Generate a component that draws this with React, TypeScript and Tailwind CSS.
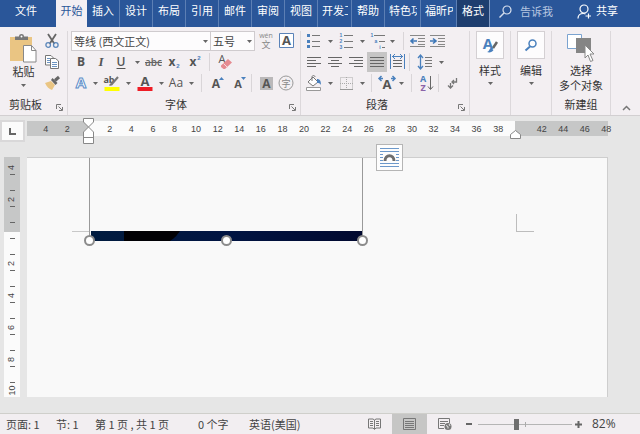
import React, { useState } from 'react';

type Children = { children?: React.ReactNode };

const TABS = ['插入', '设计', '布局', '引用', '邮件', '审阅', '视图'];
const RULER_LEFT = [4, 2];
const RULER_MAIN = Array.from({ length: 19 }, (_, i) => (i + 1) * 2);
const RULER_RIGHT = [42, 44, 46, 48];
const VERTICAL_MAIN = ['', '2', '', '4', '', '6', '', '8', ''];

const Glyph: React.FC<Children & { size?: string; box?: string }> = ({ children, size = 'w-4 h-4', box = '0 0 16 16' }) => (
  <svg className={`${size} shrink-0 overflow-visible`} viewBox={box} fill="none" aria-hidden="true">{children}</svg>
);

const Letter: React.FC<{ x: number; y: number; size: number; fill?: string; bold?: boolean; text: string; stroke?: string }> =
  ({ x, y, size, fill = '#555', bold, text, stroke }) => (
    <text
      x={x}
      y={y}
      fontSize={size}
      fill={fill}
      stroke={stroke}
      fontWeight={bold ? 700 : 400}
      textAnchor="middle"
      fontFamily={size < 7 ? '"Liberation Sans",sans-serif' : '"Open Sans","Noto Sans CJK SC",sans-serif'}
    >
      {text}
    </text>
  );

const Tool: React.FC<Children & { label: string; width?: string; active?: boolean }> = ({ children, label, width = 'w-5', active }) => (
  <button type="button" aria-label={label} className={`${width} h-5 shrink-0 flex items-center justify-center ${active ? 'bg-[#c6c5c5]' : ''}`}>{children}</button>
);

const Caret = () => (
  <Glyph size="w-[5px] h-[3px]" box="0 0 5 3"><path d="M0 0h5L2.500 3z" fill="#666" /></Glyph>
);

const Arrow: React.FC<{ label?: string; width?: string }> = ({ label = '更多', width = 'w-3' }) => (
  <button type="button" aria-label={label} className={`${width} h-5 shrink-0 flex items-center justify-center`}><Caret /></button>
);

const Divider = () => <span className="w-px h-[18px] shrink-0 bg-[#d9d5d8]" />;

const GroupLabel: React.FC<{ text: string; launcher?: boolean }> = ({ text, launcher }) => (
  <div className="h-[22px] flex items-center">
    <span className="flex-1 text-center">{text}</span>
    {launcher && (
      <button type="button" aria-label={`${text}设置`} className="w-4 h-[22px] pt-[7px] flex items-center justify-center">
        <Glyph size="w-[7px] h-[7px]" box="0 0 7 7"><path d="M.5 5V.5H5M2.500 2.500L6 6M6.500 3v3.500H3" stroke="#777" /></Glyph>
      </button>
    )}
  </div>
);

const Lines: React.FC<{ rows: [number, number][] }> = ({ rows }) => (
  <Glyph size="w-[14px] h-[12px]" box="0 0 14 12">
    {rows.map(([from, to], i) => <path key={i} d={`M${from} ${i * 3 + 1.5}H${to}`} stroke="#666" />)}
  </Glyph>
);

const Tab: React.FC<{ label: string; width: string; clipped?: boolean }> = ({ label, width, clipped }) => (
  <button type="button" className={`${width} shrink-0 flex items-start ${clipped ? 'justify-start pl-1 pr-[3px]' : 'justify-center'} border-r border-[#5c7fb4]`}>
    <span className="overflow-hidden whitespace-nowrap leading-[21px]">{label}</span>
  </button>
);

const TitleTabs = () => (
  <header className="h-[27px] flex bg-[#2a5699] text-white">
    <nav className="flex">
      <button type="button" className="w-14 pr-1 flex items-start justify-center leading-[21px]">文件</button>
      <button type="button" className="w-[31px] flex items-start justify-center leading-[21px] bg-[#f3eff3] text-[#2a5699]">开始</button>
      {TABS.map(tab => <Tab key={tab} label={tab} width="w-[33px]" />)}
      <Tab label="开发工" width="w-[34px]" clipped />
      <Tab label="帮助" width="w-[33px]" />
      <Tab label="特色功" width="w-9" clipped />
      <Tab label="福昕P" width="w-9" clipped />
      <button type="button" className="w-[33px] flex items-start justify-center leading-[21px] bg-[#1e3e6f] border-r border-[#7f9ac4]">格式</button>
    </nav>
    <button type="button" className="flex items-center gap-2 pl-[9px] pb-[5px] text-[#b6c6e0]">
      <Glyph size="w-[13px] h-[13px]" box="0 0 13 13"><path d="M5 8L.5 12.500" stroke="#d5deed" strokeWidth="1.500" /><circle cx="8" cy="5" r="4" stroke="#d5deed" strokeWidth="1.200" /></Glyph>
      告诉我
    </button>
    <button type="button" className="ml-auto mr-[22px] flex items-center gap-1 pb-[7px]">
      <Glyph size="w-[15px] h-[15px]" box="0 0 15 15"><path d="M1 15.500c0-3 2-5 5.500-5 1 0 1.500.2 2 .5M8.500 13h5.500M11.500 10.500v5" stroke="#fff" strokeWidth="1.200" /><circle cx="7" cy="6" r="4" stroke="#fff" strokeWidth="1.200" /></Glyph>
      共享
    </button>
  </header>
);

const ClipboardGroup = () => (
  <section className="w-[68px] flex flex-col border-r border-[#dcd8db]">
    <div className="h-[62px] flex">
      <button type="button" className="w-[45px] flex flex-col items-center pt-[3px] pl-[2px]">
        <Glyph size="w-[27px] h-[29px]" box="0 0 27 29">
          <path d="M0 3h22v24H0z" fill="#eac583" />
          <path d="M5 6V2.500h4C9 .8 10 0 11.500 0S14 .8 14 2.500h4V6z" fill="#777" />
          <circle cx="11.500" cy="2.500" r="1" fill="#fff" />
          <path d="M13.500 11.500h8l4.500 5v11.500H13.500z" fill="#fff" stroke="#888" />
          <path d="M21.500 11.500v5H26" stroke="#888" />
        </Glyph>
        <span className="leading-4">粘贴</span>
        <span className="mt-[5px]"><Caret /></span>
      </button>
      <div className="flex flex-col">
        <button type="button" aria-label="剪切" className="h-[19px] flex items-center">
          <Glyph size="w-[14px] h-[14px]" box="0 0 14 14"><path d="M3 0l6.500 10M11 0L4.500 10" stroke="#666" strokeWidth="1.800" /><circle cx="3.200" cy="11" r="2.300" stroke="#5b87ba" strokeWidth="1.300" /><circle cx="10.800" cy="11" r="2.300" stroke="#5b87ba" strokeWidth="1.300" /></Glyph>
        </button>
        <button type="button" aria-label="复制" className="h-[23px] flex items-center">
          <Glyph size="w-[14px] h-[14px]" box="0 0 14 14"><path d="M.5.5H6L8.500 3v7h-8z" fill="#fff" stroke="#777" /><path d="M5.500 3.500h5L13.500 6v7.500h-8z" fill="#fff" stroke="#777" /><path d="M2 3.500h3M2 5.500h3M2 7.500h3M7 7.500h5M7 9.500h5M7 11.500h5" stroke="#6d94c2" /></Glyph>
        </button>
        <button type="button" aria-label="格式刷" className="h-5 flex items-center">
          <Glyph size="w-[15px] h-[14px]" box="0 0 15 14"><path d="M0 7l6-2 4 4-3 5C4 13 2 11 0 7z" fill="#eac583" /><path d="M6 4l1.500-2 5 5L10.500 9z" fill="#666" /><path d="M10 4.500l4-3.500" stroke="#666" strokeWidth="3" /></Glyph>
        </button>
      </div>
    </div>
    <GroupLabel text="剪贴板" launcher />
  </section>
);

const FontGroup = () => {
  const [family, setFamily] = useState('等线 (西文正文)');
  const [size, setSize] = useState('五号');
  return (
    <section className="w-[233px] flex flex-col border-r border-[#dcd8db]">
      <div className="h-5 flex items-center pl-[3px]">
        <label className="relative w-[140px] h-5">
          <select aria-label="字体" value={family} onChange={e => setFamily(e.target.value)} className="appearance-none w-full h-full pl-[2px] pb-px bg-[#fdfcfd] border border-[#cfcbce] text-[#444]">
            <option>等线 (西文正文)</option>
          </select>
          <span className="absolute right-0 top-0 pointer-events-none"><Arrow label="字体列表" /></span>
        </label>
        <label className="relative w-[45px] h-5 -ml-px">
          <select aria-label="字号" value={size} onChange={e => setSize(e.target.value)} className="appearance-none w-full h-full pl-[2px] pb-px bg-[#fdfcfd] border border-[#cfcbce] text-[#444]">
            <option>五号</option>
          </select>
          <span className="absolute right-0 top-0 pointer-events-none"><Arrow label="字号列表" /></span>
        </label>
        <Tool label="拼音指南" width="w-[22px]"><Glyph><Letter x={8} y={5} size={7} fill="#888" text="wén" /><Letter x={8} y={15} size={9} fill="#888" text="文" /></Glyph></Tool>
        <Tool label="字符边框"><Glyph><path d="M.5.5h14v14H.5z" fill="#fff" stroke="#5b83b8" /><Letter x={7.5} y={12} size={13} bold text="A" /></Glyph></Tool>
      </div>
      <div className="h-[22px] flex items-center pl-[3px]">
        <Tool label="加粗"><span className="font-['Open_Sans'] font-bold text-xs text-[#555]">B</span></Tool>
        <Tool label="倾斜"><span className="font-['Liberation_Serif'] font-bold italic text-[13px] text-[#555]">I</span></Tool>
        <Tool label="下划线"><span className="font-['Open_Sans'] font-semibold text-xs text-[#555] underline underline-offset-2">U</span></Tool>
        <Arrow />
        <Tool label="删除线" width="w-[21px]"><span className="font-['Open_Sans'] font-semibold text-[10px] text-[#666] line-through">abc</span></Tool>
        <Tool label="下标"><Glyph><Letter x={6} y={12} size={12} bold text="x" /><Letter x={12} y={14} size={6} bold fill="#4a80bd" text="2" /></Glyph></Tool>
        <Tool label="上标"><Glyph><Letter x={7} y={12} size={12} bold text="x" /><Letter x={13} y={6} size={6} bold fill="#4a80bd" text="2" /></Glyph></Tool>
        <span className="w-[5px]" />
        <Divider />
        <Tool label="清除格式" width="w-[30px]">
          <Glyph><Letter x={5} y={9} size={11} text="A" /><path d="M4 11.500l7-6.500 4 3.500-7 6.500H6.500L4 13z" fill="#e58b91" /><path d="M6.500 9.500l4 4" stroke="#f6dcdf" /></Glyph>
        </Tool>
      </div>
      <div className="h-5 flex items-center pl-[3px]">
        <Tool label="文本效果"><Glyph><Letter x={8} y={13} size={15} bold fill="#fff" stroke="#5a8cc8" text="A" /></Glyph></Tool>
        <Arrow width="w-2" />
        <Tool label="突出显示" width="w-[25px]"><Glyph><Letter x={5} y={8} size={9} bold text="ab" /><path d="M7 10L14 2" stroke="#777" strokeWidth="2" /><path d="M5 10l2-2 1.500 1.500L6 11z" fill="#777" /><path d="M.5 12h15v4H.5z" fill="#ffff00" /></Glyph></Tool>
        <Arrow width="w-2" />
        <Tool label="字体颜色" width="w-[25px]"><Glyph><Letter x={8} y={11} size={13} bold text="A" /><path d="M.5 12h15v4H.5z" fill="#ee1c25" /></Glyph></Tool>
        <Arrow width="w-2" />
        <Tool label="更改大小写" width="w-[22px]"><span className="font-['Open_Sans'] text-xs text-[#555]">Aa</span></Tool>
        <Arrow width="w-2" />
        <span className="w-[6px]" />
        <Divider />
        <span className="w-[3px]" />
        <Tool label="增大字号" width="w-6"><Glyph><Letter x={7} y={13} size={12} bold text="A" /><path d="M10 5l2.500-3L15 5z" fill="#4a80bd" /></Glyph></Tool>
        <Tool label="减小字号" width="w-5"><Glyph><Letter x={7} y={13} size={11} bold text="A" /><path d="M10 2l2.500 3L15 2z" fill="#4a80bd" /></Glyph></Tool>
        <span className="w-[2px]" />
        <Divider />
        <span className="w-1" />
        <Tool label="字符底纹"><Glyph size="w-[13px] h-[13px]" box="0 0 13 13"><path d="M0 0h13v13H0z" fill="#bab8b9" /><Letter x={6.5} y={11} size={12} bold text="A" /></Glyph></Tool>
        <Tool label="带圈字符"><Glyph><circle cx="8" cy="8" r="7" stroke="#999" /><Letter x={8} y={11.500} size={9} fill="#888" text="字" /></Glyph></Tool>
      </div>
      <GroupLabel text="字体" launcher />
    </section>
  );
};

const Indent: React.FC<{ direction: 'in' | 'out' }> = ({ direction }) => (
  <Glyph>
    <path d="M0 2.500h15M8 5.500h7M8 8.500h7M8 11.500h7M0 13.500h15" stroke="#888" />
    <path d={direction === 'in' ? 'M0 8h5M3 5.500L6 8l-3 2.500' : 'M1 8h6M3.500 5.500L1 8l2.500 2.500'} stroke="#3f78b8" strokeWidth="1.600" />
  </Glyph>
);

const ParagraphGroup = () => (
  <section className="w-[169px] flex flex-col border-r border-[#dcd8db]">
    <div className="h-5 flex items-center pl-[3px]">
      <Tool label="项目符号">
        <Glyph><path d="M6 2.500h8M6 8.500h8M6 13.500h8" stroke="#777" /><path d="M1 1h3v3H1zM1 7h3v3H1zM1 12h3v3H1z" fill="#4a80bd" /></Glyph>
      </Tool>
      <Arrow />
      <Tool label="编号">
        <Glyph><path d="M6 2.500h9M6 8.500h9M6 14.500h9" stroke="#777" /><Letter x={3} y={4} size={5} bold fill="#4a80bd" text="1" /><Letter x={3} y={10} size={5} bold fill="#4a80bd" text="2" /><Letter x={3} y={16} size={5} bold fill="#4a80bd" text="3" /></Glyph>
      </Tool>
      <Arrow />
      <Tool label="多级列表">
        <Glyph><path d="M4 2.500h11M9 8.500h6M12 14.500h3" stroke="#777" /><Letter x={2} y={4} size={5} bold fill="#4a80bd" text="1" /><Letter x={6} y={10} size={5} bold fill="#4a80bd" text="a" /><Letter x={10} y={16} size={5} bold fill="#4a80bd" text="i" /></Glyph>
      </Tool>
      <Arrow width="w-2" />
      <span className="w-[7px]" />
      <Divider />
      <span className="w-1" />
      <Tool label="减少缩进"><Indent direction="out" /></Tool>
      <Tool label="增加缩进"><Indent direction="in" /></Tool>
    </div>
    <div className="h-[22px] flex items-center pl-[3px] gap-px">
      <Tool label="左对齐"><Lines rows={[[0, 14], [0, 9], [0, 14], [0, 9]]} /></Tool>
      <Tool label="居中"><Lines rows={[[0, 14], [3, 11], [0, 14], [3, 11]]} /></Tool>
      <Tool label="右对齐"><Lines rows={[[0, 14], [5, 14], [0, 14], [5, 14]]} /></Tool>
      <Tool label="两端对齐" active><Lines rows={[[0, 14], [0, 14], [0, 14], [0, 14]]} /></Tool>
      <Tool label="分散对齐">
        <Glyph><path d="M.5 0v15M14.500 0v15M2 2.500h11M5 0L2.500 2.500 5 5M10 0l2.500 2.500L10 5" stroke="#4a80bd" /><path d="M3 6.500h9M3 9.500h9M3 12.500h9" stroke="#666" /></Glyph>
      </Tool>
      <Divider />
      <Tool label="行距" width="w-[27px]">
        <Glyph><path d="M3.500 1v14M1 4l2.500-3L6 4M1 12l2.500 3L6 12" stroke="#4a80bd" strokeWidth="1.300" /><path d="M8 3.500h7M8 6.500h7M8 9.500h7M8 12.500h7" stroke="#777" /></Glyph>
      </Tool>
      <Arrow width="w-[5px]" />
    </div>
    <div className="h-5 flex items-center pl-[3px]">
      <Tool label="底纹">
        <Glyph><path d="M2 7l5-5 5 5-5 4z" fill="#fff" stroke="#777" /><path d="M6 6V2c0-2 3-2 3 0" stroke="#777" /><path d="M11 4c3 0 4 2 4 6-1.500-2-2-2-4-2z" fill="#4a80bd" /><path d="M.5 12.500h14v3H.5z" fill="#fff" stroke="#999" /></Glyph>
      </Tool>
      <Arrow />
      <Tool label="边框"><Glyph size="w-[13px] h-[13px]" box="0 0 13 13"><path d="M.5.5h12v12H.5zM6.500 0v13M0 6.500h13" stroke="#aaa" strokeDasharray="1 1" /><path d="M0 12.500h13" stroke="#999" /></Glyph></Tool>
      <Arrow />
      <span className="w-[3px]" />
      <Divider />
      <span className="w-[2px]" />
      <Tool label="中文版式" width="w-[25px]"><Glyph><Letter x={8} y={14} size={13} bold text="A" /><path d="M4 3.500H0M2.500 1L0 3.500 2.500 6M12 3.500h4M13.500 1L16 3.500 13.500 6" stroke="#4a80bd" strokeWidth="1.500" /></Glyph></Tool>
      <Arrow width="w-[5px]" />
      <span className="w-[7px]" />
      <Divider />
      <span className="w-1" />
      <Tool label="排序" width="w-[22px]"><Glyph><Letter x={4} y={7} size={9} bold fill="#4a80bd" text="A" /><Letter x={4} y={16} size={9} bold fill="#8a62a8" text="Z" /><path d="M11.500 1v13M9 11.500l2.500 3 2.500-3" stroke="#666" /></Glyph></Tool>
      <Divider />
      <Tool label="显示编辑标记" width="w-7"><Glyph><path d="M11.500 3v4H7M9 5L7 7l2 2M5.500 8v5M3 10.500l2.500 2.500L8 10.500" stroke="#777" strokeWidth="1.300" /></Glyph></Tool>
    </div>
    <GroupLabel text="段落" launcher />
  </section>
);

const BoxedGroup: React.FC<Children & { label: string }> = ({ children, label }) => (
  <section className="w-[41px] border-r border-[#dcd8db]">
    <button type="button" className="w-full flex flex-col items-center">
      <span className="w-7 h-7 flex items-center justify-center bg-[#fdfcfd] border border-[#d4d0d3]">{children}</span>
      <span className="mt-[3px] leading-4">{label}</span>
      <span className="mt-1"><Caret /></span>
    </button>
  </section>
);

const Ribbon = () => (
  <div className="h-[89px] flex pt-1 bg-[#f3eff2] border-b border-[#d2cfd1] text-[#333]">
    <ClipboardGroup />
    <FontGroup />
    <ParagraphGroup />
    <BoxedGroup label="样式">
      <Glyph><Letter x={6} y={12} size={15} bold fill="#4a80bd" text="A" /><path d="M15 5l-4 6" stroke="#666" strokeWidth="2.500" /><path d="M5 15c2 0 2-3 4-4l2.500 2c-1 2-4 3-6.500 2z" fill="#4a80bd" /></Glyph>
    </BoxedGroup>
    <BoxedGroup label="编辑">
      <Glyph size="w-3 h-3" box="0 0 12 12"><path d="M5 7.500L.5 11.500" stroke="#4a80bd" strokeWidth="2" /><circle cx="7.500" cy="4.500" r="3.500" stroke="#4a80bd" strokeWidth="1.500" /></Glyph>
    </BoxedGroup>
    <section className="w-[59px] flex flex-col border-r border-[#dcd8db]">
      <button type="button" className="h-[62px] flex flex-col items-center pt-[3px]">
        <Glyph size="w-7 h-[29px]" box="0 0 28 29">
          <path d="M.5.5h14v14H.5z" fill="#fff" stroke="#7ba3d0" />
          <path d="M9 4h15v15H9z" fill="#858585" />
          <path d="M18 11v13l3-3 2.500 6.500 2.500-1-3-6.500h4z" fill="#fff" stroke="#888" />
        </Glyph>
        <span className="leading-[15px] whitespace-nowrap">选择<br />多个对象</span>
      </button>
      <GroupLabel text="新建组" />
    </section>
    <button type="button" aria-label="折叠功能区" className="ml-auto mr-[9px] mb-1 self-end">
      <Glyph size="w-[9px] h-[6px]" box="0 0 9 6"><path d="M1 5l3.500-3.500L8 5" stroke="#777" strokeWidth="1.500" /></Glyph>
    </button>
  </div>
);

const Numbers: React.FC<{ values: number[] }> = ({ values }) => (
  <>{values.map(n => <span key={n} className="flex-1 w-0 flex justify-center">{n}</span>)}</>
);

const HorizontalRuler = () => (
  <div className="h-[41px] flex items-start pt-1">
    <button type="button" aria-label="制表符" className="w-[25px] h-[22px] border-2 border-[#d9d8d9] bg-[#fbfbfb] flex items-center justify-center">
      <Glyph size="w-[7px] h-[7px]" box="0 0 7 7"><path d="M1 0v6h6" stroke="#666" strokeWidth="2" /></Glyph>
    </button>
    <div className="flex-1 ml-[2px] mr-8 mt-px h-[15px] flex leading-4 font-['Liberation_Sans'] text-[9px] text-[#444]">
      <div className="w-[61px] pl-2 pr-[10px] flex bg-[#c6c7c7]"><Numbers values={RULER_LEFT} /></div>
      <div className="relative flex-1 pl-[11px] pr-[6px] flex bg-[#fbfbfb]">
        <Numbers values={RULER_MAIN} />
        <span className="absolute -left-[5px] -top-[3px]">
          <Glyph size="w-[11px] h-[26px]" box="0 0 11 26"><path d="M.5.5h10v3.500l-5 5-5-5zM5.500 9l5 5v11.500H.5V14zM.5 19.500h10" fill="#fff" stroke="#888" /></Glyph>
        </span>
        <span className="absolute -right-[6px] top-[9px]">
          <Glyph size="w-[11px] h-[9px]" box="0 0 11 9"><path d="M5.500.5l5 4v4H.5v-4z" fill="#fff" stroke="#888" /></Glyph>
        </span>
      </div>
      <div className="w-[93px] flex bg-[#c6c7c7]">
        <div className="flex-1 pl-4 -mr-[9px] flex"><Numbers values={RULER_RIGHT} /></div>
      </div>
    </div>
  </div>
);

const VerticalCell: React.FC<{ text: string }> = ({ text }) => (
  <div className="relative h-4 w-full flex items-center justify-center">
    <span className="-rotate-90 leading-none">{text}</span>
    <span className="absolute bottom-0 w-[5px] h-px bg-[#666]" />
  </div>
);

const VerticalRuler = () => (
  <div className="w-4 ml-1 flex flex-col font-['Liberation_Sans'] text-[9px] text-[#444]">
    <div className="h-[75px] pt-[2px] bg-[#c6c7c7]">
      {['4', '', '2', ''].map((t, i) => <VerticalCell key={i} text={t} />)}
    </div>
    <div className="bg-[#fbfbfb]">
      <div className="h-[7px] flex items-end justify-center"><span className="w-[5px] h-px bg-[#666]" /></div>
      {VERTICAL_MAIN.map((t, i) => <VerticalCell key={i} text={t} />)}
      <div className="h-[14px] flex items-center justify-center"><span className="-rotate-90 leading-none">10</span></div>
    </div>
  </div>
);

const Handle: React.FC<{ place: string }> = ({ place }) => (
  <span className={`absolute -bottom-[5px] w-[11px] h-[11px] rounded-full border-2 border-[#8c8c8c] bg-white ${place}`} />
);

const DocumentPage = () => (
  <main className="relative flex-1 ml-[7px] mr-8 h-60 pl-[62px] bg-[#f9f9f9] border-t border-r border-[#cecece]">
    <div className="relative w-[274px] h-[83px] flex flex-col justify-end border-x border-[#9a9a9a]">
      <svg className="w-full h-[10px]" viewBox="0 0 272 10" preserveAspectRatio="none" role="img" aria-label="图片">
        <defs>
          <linearGradient id="night"><stop offset="0" stopColor="#001b3f" /><stop offset="0.500" stopColor="#001442" /><stop offset="1" stopColor="#00082f" /></linearGradient>
        </defs>
        <path d="M1 0h271v10H1z" fill="url(#night)" />
        <path d="M34 0h56c-3 4-5 7-10 10H34z" fill="#000004" />
      </svg>
      <Handle place="-left-[6px]" />
      <Handle place="left-[131px]" />
      <Handle place="-right-[6px]" />
    </div>
    <span className="absolute left-[45px] top-[73px] w-[17px] h-px bg-[#c8c8c8]" />
    <span className="absolute right-[73px] top-[56px] w-[18px] h-[18px] border-l border-b border-[#bdbdbd]" />
    <button type="button" aria-label="布局选项" className="absolute left-[349px] -top-[14px] w-[27px] h-[27px] flex items-center justify-center bg-[#fdfdfd] border border-[#b5b5b5]">
      <Glyph size="w-[19px] h-[19px]" box="0 0 19 19">
        <path d="M0 .5h19M0 3.500h19M0 6.500h3M16 6.500h3M0 9.500h3M16 9.500h3M0 12.500h3M16 12.500h3M0 15.500h19M0 18.500h19" stroke="#6c98ca" />
        <path d="M5 13c0-7 9-7 9 0" stroke="#6e6e6e" strokeWidth="3" />
      </Glyph>
    </button>
  </main>
);

const StatusBar = () => {
  const [zoom, setZoom] = useState(82);
  return (
    <footer className="h-[21px] flex items-center pl-[6px] border-t border-[#cfcfcb] bg-[#f2eef1] text-[#444] whitespace-nowrap">
      <span className="w-[50px]">页面: 1</span>
      <span className="w-[39px]">节: 1</span>
      <span className="w-[103px]">第 1 页 , 共 1 页</span>
      <span className="w-[51px]">0 个字</span>
      <span>英语(美国)</span>
      <div className="ml-auto h-full flex items-center">
        <button type="button" aria-label="阅读视图" className="w-[35px] h-full flex items-center justify-center">
          <Glyph size="w-[13px] h-3" box="0 0 13 12"><path d="M.5 1h4.500l1.500 1L8 1h4.500v9H8L6.500 11.500 5 10H.5zM6.500 2v9M2 3.500h3M2 5.500h3M2 7.500h3M8 3.500h3M8 5.500h3M8 7.500h3" stroke="#777" /></Glyph>
        </button>
        <button type="button" aria-label="页面视图" className="w-[35px] h-full flex items-center justify-center bg-[#c6c6c5]">
          <Glyph size="w-[13px] h-3" box="0 0 13 12"><path d="M.5.5h12v11H.5zM2 3.500h9M2 5.500h9M2 7.500h9M2 9.500h9" stroke="#777" /></Glyph>
        </button>
        <button type="button" aria-label="Web 版式" className="w-[36px] h-full flex items-center justify-center">
          <Glyph size="w-[14px] h-3" box="0 0 14 12"><path d="M6 10.500H.5V.5h11V5M2 3.500h8M2 5.500h5M2 7.500h4" stroke="#777" /><circle cx="10" cy="8.500" r="3.500" fill="#777" /><path d="M8 7.500l2 1v2M11 6l1 2" stroke="#e8e8e8" /></Glyph>
        </button>
        <button type="button" aria-label="缩小" className="w-3 ml-[3px] h-full flex items-center"><Glyph size="w-[6px] h-[6px]" box="0 0 6 6"><path d="M0 3h6" stroke="#666" strokeWidth="2" /></Glyph></button>
        <label className="relative w-[94px] h-full flex items-center">
          <input
            type="range"
            aria-label="显示比例"
            min={10}
            max={190}
            value={zoom}
            onChange={e => setZoom(Number(e.target.value))}
            className="appearance-none w-full h-px bg-[#b5b5b5] [&::-webkit-slider-thumb]:appearance-none [&::-webkit-slider-thumb]:w-[5px] [&::-webkit-slider-thumb]:h-[11px] [&::-webkit-slider-thumb]:bg-[#6f6f6f]"
          />
          <span className="absolute left-[47px] w-px h-[5px] bg-[#aaa]" />
        </label>
        <button type="button" aria-label="放大" className="w-[20px] pl-[3px] h-full flex items-center"><Glyph size="w-[7px] h-[7px]" box="0 0 7 7"><path d="M0 3.500h7M3.500 0v7" stroke="#666" strokeWidth="2" /></Glyph></button>
        <span className="w-[48px] text-xs font-['Open_Sans']">{zoom}%</span>
      </div>
    </footer>
  );
};

const App: React.FC = () => (
  <div className="min-h-screen flex flex-col bg-[#e6e6e6] font-['Noto_Sans_CJK_SC',sans-serif] text-[11px] leading-4">
    <TitleTabs />
    <Ribbon />
    <HorizontalRuler />
    <div className="flex">
      <VerticalRuler />
      <DocumentPage />
    </div>
    <div className="mt-auto"><StatusBar /></div>
  </div>
);

export default App;
